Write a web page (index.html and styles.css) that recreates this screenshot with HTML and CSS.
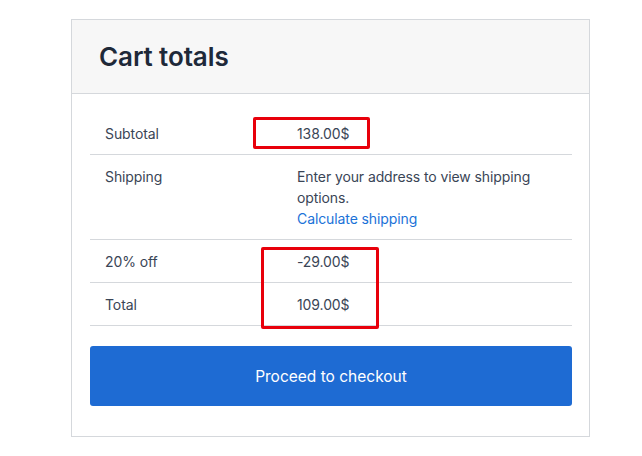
FILE: index.html
```html
<!DOCTYPE html>
<html>
<head>
<meta charset="utf-8">
<link rel="stylesheet" href="styles.css">
</head>
<body>
<div class="page">
  <section class="card">
    <header class="card-head">
      <h2 class="title">Cart totals</h2>
    </header>
    <div class="card-body">
      <table class="totals">
        <tr>
          <th>Subtotal</th>
          <td>138.00$</td>
        </tr>
        <tr>
          <th>Shipping</th>
          <td>Enter your address to view shipping options.<br><a class="link" href="#">Calculate shipping</a></td>
        </tr>
        <tr>
          <th>20% off</th>
          <td>-29.00$</td>
        </tr>
        <tr>
          <th>Total</th>
          <td>109.00$</td>
        </tr>
      </table>
      <button class="checkout">Proceed to checkout</button>
    </div>
    <div class="mark mark-1"></div>
    <div class="mark mark-2"></div>
  </section>
</div>
</body>
</html>
```

FILE: styles.css
```css
html, body {
  margin: 0;
  padding: 0;
  background: #ffffff;
}
body {
  font-family: Inter, "Noto Sans", sans-serif;
  color: #3a4556;
}
.page {
  padding: 19px 0 0 71px;
}
.card {
  position: relative;
  width: 517px;
  border: 1px solid #d5d8dc;
  background: #fff;
}
.card-head {
  background: #f7f7f7;
  border-bottom: 1px solid #d5d8dc;
  height: 73px;
  display: flex;
  align-items: center;
  padding-left: 27px;
}
.title {
  margin: 0;
  font-size: 26px;
  font-weight: 600;
  color: #1e2939;
  letter-spacing: -0.1px;
}
.card-body {
  padding: 18px 17px 30px 18px;
}
.totals {
  width: 100%;
  border-collapse: collapse;
  font-size: 14px;
  line-height: 21px;
  letter-spacing: -0.1px;
}
.totals tr {
  border-bottom: 1px solid #d5d8dc;
}
.totals th, .totals td {
  text-align: left;
  font-weight: 400;
  vertical-align: top;
  padding: 11px 15px 10px 15px;
}
.totals th {
  width: 162px;
}
.link {
  color: #1b72d8;
  text-decoration: none;
}
.checkout {
  display: block;
  width: 100%;
  height: 60px;
  margin-top: 20px;
  border: 0;
  border-radius: 3px;
  background: #1e6bd3;
  color: #fff;
  font-family: Inter, "Noto Sans", sans-serif;
  font-size: 15.5px;
  font-weight: 400;
  cursor: pointer;
}
.mark {
  position: absolute;
  border: 3px solid #e8000b;
  border-radius: 2px;
  box-sizing: border-box;
}
.mark-1 {
  left: 181px;
  top: 97px;
  width: 117px;
  height: 32px;
}
.mark-2 {
  left: 189px;
  top: 227px;
  width: 118px;
  height: 82px;
}
```
